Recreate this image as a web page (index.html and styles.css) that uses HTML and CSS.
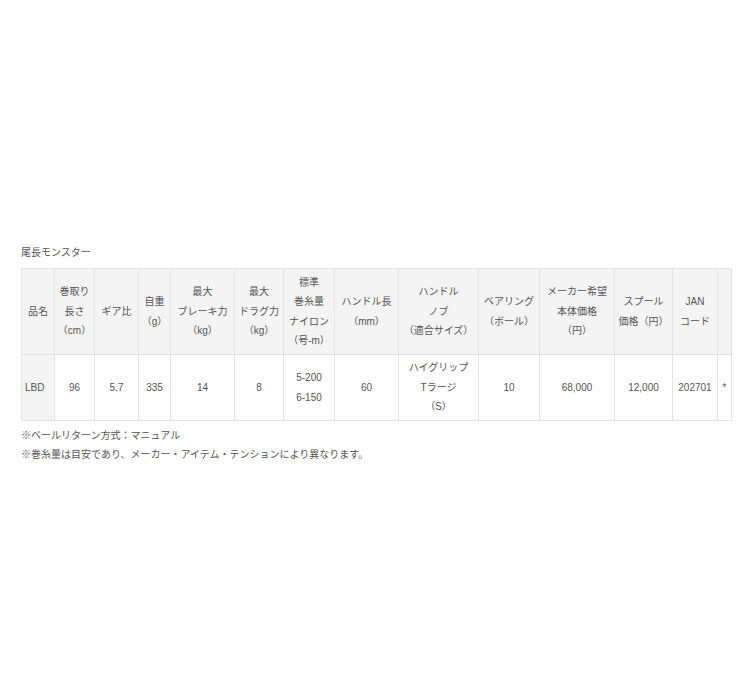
FILE: index.html
```html
<!DOCTYPE html>
<html lang="ja">
<head>
<meta charset="utf-8">
<title>尾長モンスター</title>
<link rel="stylesheet" href="styles.css">
</head>
<body>
<div class="page">
  <h2 class="title">尾長モンスター</h2>
  <table class="spec">
    <colgroup>
      <col class="c1"><col class="c2"><col class="c3"><col class="c4"><col class="c5"><col class="c6"><col class="c7"><col class="c8"><col class="c9"><col class="c10"><col class="c11"><col class="c12"><col class="c13"><col class="c14">
    </colgroup>
    <thead>
      <tr>
        <th>品名</th>
        <th>巻取り<br>長さ<br>（cm）</th>
        <th>ギア比</th>
        <th>自重<br>（g）</th>
        <th>最大<br>ブレーキ力<br>（kg）</th>
        <th>最大<br>ドラグ力<br>（kg）</th>
        <th>標準<br>巻糸量<br>ナイロン<br>（号-m）</th>
        <th>ハンドル長<br>（mm）</th>
        <th>ハンドル<br>ノブ<br>（適合サイズ）</th>
        <th>ベアリング<br>（ボール）</th>
        <th>メーカー希望<br>本体価格<br>（円）</th>
        <th>スプール<br>価格（円）</th>
        <th>JAN<br>コード</th>
        <th></th>
      </tr>
    </thead>
    <tbody>
      <tr>
        <td class="name">LBD</td>
        <td>96</td>
        <td>5.7</td>
        <td>335</td>
        <td>14</td>
        <td>8</td>
        <td>5-200<br>6-150</td>
        <td>60</td>
        <td>ハイグリップ<br>Tラージ<br>（S）</td>
        <td>10</td>
        <td>68,000</td>
        <td>12,000</td>
        <td>202701</td>
        <td>*</td>
      </tr>
    </tbody>
  </table>
  <p class="note">※ベールリターン方式：マニュアル</p>
  <p class="note">※巻糸量は目安であり、メーカー・アイテム・テンションにより異なります。</p>
</div>
</body>
</html>
```
FILE: styles.css
```css
html, body {
  margin: 0;
  padding: 0;
  background: #fff;
}
.page {
  padding: 243px 0 0 21px;
  font-family: "Liberation Sans", "Noto Sans CJK JP", sans-serif;
  color: #555;
  font-size: 10px;
}
.title {
  margin: 0 0 5px 0;
  font-size: 10px;
  font-weight: normal;
  line-height: 20px;
  color: #555;
}
.spec {
  border-collapse: collapse;
  table-layout: fixed;
  width: 711px;
}
.c1 { width: 33px; }
.c2 { width: 40px; }
.c3 { width: 44px; }
.c4 { width: 32px; }
.c5 { width: 64px; }
.c6 { width: 49px; }
.c7 { width: 51px; }
.c8 { width: 64px; }
.c9 { width: 80px; }
.c10 { width: 61px; }
.c11 { width: 75px; }
.c12 { width: 58px; }
.c13 { width: 45px; }
.c14 { width: 14px; }
.spec th, .spec td {
  border: 1px solid #e3e3e3;
  padding: 0;
  text-align: center;
  vertical-align: middle;
  line-height: 19.5px;
  font-size: 10px;
  font-weight: normal;
  color: #555;
  white-space: nowrap;
  overflow: hidden;
}
.spec th {
  background: #f4f4f4;
  height: 85px;
}
.spec td {
  height: 65px;
  background: #fff;
}
.spec td.name {
  background: #f4f4f4;
  text-align: left;
  padding-left: 3px;
}
.note {
  margin: 0;
  line-height: 19px;
  font-size: 10px;
}
.spec + .note {
  margin-top: 5px;
}
```
